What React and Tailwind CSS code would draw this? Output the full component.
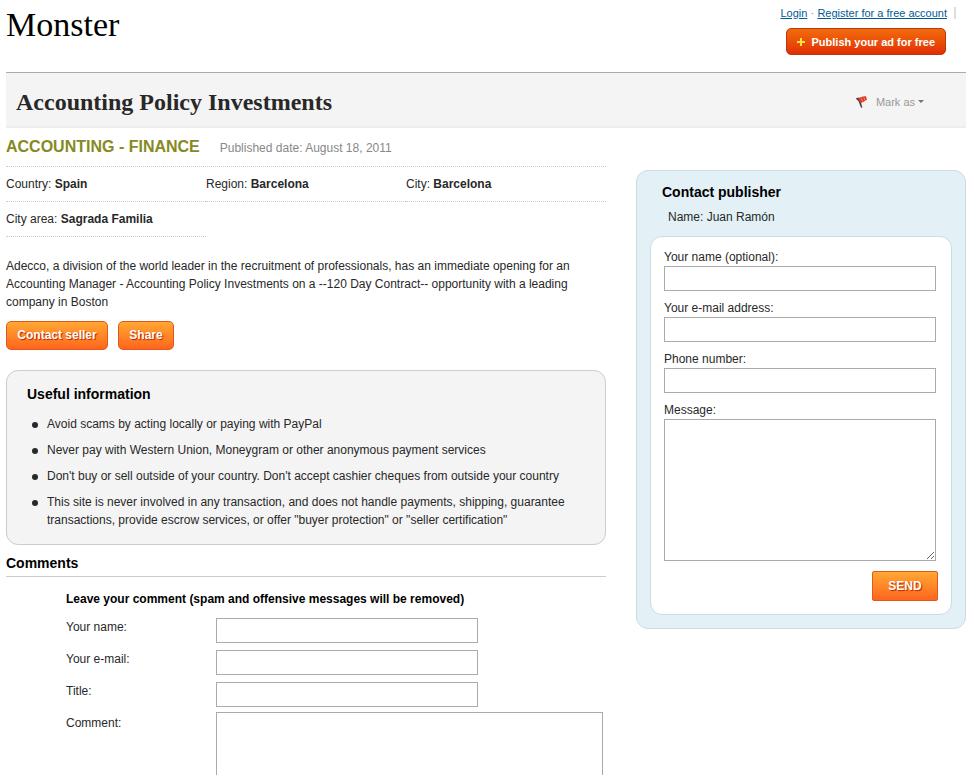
const buttonLook =
  "border border-[#e2581a] bg-gradient-to-b from-[#ffa733] to-[#ff641c] font-bold text-[12px] text-white text-shadow-[1px_1px_1px_#b02800]";
const fieldLook = "block border border-[#aaaaaa] bg-white px-1 outline-none";

const facts = [
  ["Country", "Spain"],
  ["Region", "Barcelona"],
  ["City", "Barcelona"],
  ["City area", "Sagrada Familia"],
];

const tips = [
  "Avoid scams by acting locally or paying with PayPal",
  "Never pay with Western Union, Moneygram or other anonymous payment services",
  "Don't buy or sell outside of your country. Don't accept cashier cheques from outside your country",
  'This site is never involved in any transaction, and does not handle payments, shipping, guarantee transactions, provide escrow services, or offer "buyer protection" or "seller certification"',
];

const contactFields = [
  ["contact-name", "Your name (optional):", "text"],
  ["contact-email", "Your e-mail address:", "email"],
  ["contact-phone", "Phone number:", "tel"],
];

const commentFields = [
  ["comment-name", "Your name:", "text"],
  ["comment-email", "Your e-mail:", "email"],
  ["comment-title", "Title:", "text"],
];

function Header() {
  return (
    <header className="flex h-[72px] items-start justify-between">
      <p className="pt-[5px] font-['Liberation_Serif',serif] text-[34px] leading-10 text-black">Monster</p>
      <div className="flex flex-col items-end gap-[7px] pt-[5px]">
        <nav className="flex items-center text-[11px] leading-4 text-[#005c94]">
          <a href="#login" className="underline">Login</a>
          <span className="w-[10px] text-center text-[#888888]">·</span>
          <a href="#register" className="underline">Register for a free account</a>
          <span className="ml-[7px] mr-[10px] h-3 w-[2px] bg-[#dddddd]" />
        </nav>
        <button
          type="button"
          className="mr-5 flex h-[27px] items-center gap-[7px] rounded-[5px] border border-[#b83a0c] bg-gradient-to-b from-[#f26b0c] to-[#e22c06] px-[10px] text-[11px] font-bold text-white"
        >
          <svg viewBox="0 0 8 8" className="size-2" aria-hidden="true">
            <path d="M3 0h2v3h3v2H5v3H3V5H0V3h3z" fill="#ffdf3a" />
          </svg>
          Publish your ad for free
        </button>
      </div>
    </header>
  );
}

function TitleBar() {
  return (
    <div className="flex h-14 items-center justify-between border-t border-b-2 border-t-[#aaaaaa] border-b-[#ededed] bg-[#f4f4f4] pl-[10px] pr-[42px]">
      <h1 className="pt-1 font-['Liberation_Serif',serif] text-[24px] font-bold leading-7 text-[#282828]">
        Accounting Policy Investments
      </h1>
      <button type="button" className="flex items-center pt-1 text-[11px] leading-4 text-[#999999]">
        <svg viewBox="0 0 14 14" className="mr-[7px] size-[14px]" aria-hidden="true">
          <path d="M.6 3.6L3.4 2.6L5.2 5L7.4 12.4L6 12.8L3.4 6Z" fill="#444444" />
          <path d="M3 2.8C5.4 3.4 7.4 .8 11 1.4L12 5C9.6 5 8.6 8 5 7.8Z" fill="#dc3520" />
          <path d="M6.2 3.4l1.4 3M8.8 2.4l1.2 2.6" stroke="#f6a292" strokeWidth=".9" />
        </svg>
        Mark as
        <svg viewBox="0 0 6 3" className="ml-[3px] h-[3px] w-[6px]" aria-hidden="true">
          <path d="M0 0h6L3 3z" fill="#777777" />
        </svg>
      </button>
    </div>
  );
}

function ContactPublisher() {
  return (
    <aside className="mt-[42px] w-[330px] shrink-0 rounded-[12px] border border-[#c9dde3] bg-[#e3f0f6] px-[13px] pt-3 pb-[13px]">
      <h2 className="pl-3 text-[14px] font-bold text-black">Contact publisher</h2>
      <p className="mt-[7px] pl-[18px]">Name: Juan Ramón</p>
      <form className="mt-[10px] rounded-[12px] border border-[#c9dde3] bg-white px-[13px] pt-[11px] pb-[13px]">
        {contactFields.map(([id, label, type]) => (
          <div key={id} className="mb-2">
            <label htmlFor={id} className="block">{label}</label>
            <input id={id} type={type} className={`${fieldLook} h-[25px] w-[272px]`} />
          </div>
        ))}
        <label htmlFor="contact-message" className="block">Message:</label>
        <textarea id="contact-message" className={`${fieldLook} h-[142px] w-[272px] resize`} />
        <button type="button" className={`${buttonLook} mt-[10px] ml-auto block h-[30px] w-[66px] rounded-[2px]`}>
          SEND
        </button>
      </form>
    </aside>
  );
}

function Comments() {
  return (
    <section className="mt-2">
      <h2 className="border-b border-[#cccccc] pt-[1px] pb-1 text-[14px] font-bold text-black">Comments</h2>
      <form className="pt-[13px] pl-[60px]">
        <p className="font-bold text-black">Leave your comment (spam and offensive messages will be removed)</p>
        <div className="mt-[10px] flex flex-col gap-[7px]">
          {commentFields.map(([id, label, type]) => (
            <div key={id} className="flex items-start">
              <label htmlFor={id} className="w-[150px]">{label}</label>
              <input id={id} type={type} className={`${fieldLook} h-[25px] w-[262px]`} />
            </div>
          ))}
        </div>
        <div className="mt-[5px] flex items-start">
          <label htmlFor="comment-text" className="w-[150px] pt-[2px]">Comment:</label>
          <textarea id="comment-text" className={`${fieldLook} h-[142px] w-[387px] resize`} />
        </div>
      </form>
    </section>
  );
}

export default function App() {
  return (
    <div className="bg-white pr-[2px] pl-[6px] font-['Liberation_Sans',Arial,sans-serif] text-[12px] leading-[18px] text-[#282828]">
      <Header />
      <TitleBar />
      <div className="flex items-start gap-[30px]">
        <main className="min-w-0 flex-1">
          <div className="flex h-[39px] items-center gap-5 border-b border-dotted border-[#cccccc]">
            <h2 className="text-[16px] font-bold text-[#858a22]">ACCOUNTING - FINANCE</h2>
            <p className="pt-[2px] text-[#888888]">Published date: August 18, 2011</p>
          </div>
          <ul className="grid grid-cols-3">
            {facts.map(([name, value]) => (
              <li key={name} className="h-[35px] border-b border-dotted border-[#cccccc] pt-2">
                {name}: <strong>{value}</strong>
              </li>
            ))}
          </ul>
          <p className="mt-5">
            Adecco, a division of the world leader in the recruitment of professionals, has an immediate opening for an
            Accounting Manager - Accounting Policy Investments on a --120 Day Contract-- opportunity with a leading
            company in Boston
          </p>
          <div className="mt-[10px] flex gap-[10px]">
            <button type="button" className={`${buttonLook} h-[29px] w-[102px] rounded-[5px] pb-[2px]`}>Contact seller</button>
            <button type="button" className={`${buttonLook} h-[29px] w-[56px] rounded-[5px] pb-[2px]`}>Share</button>
          </div>
          <section className="mt-5 rounded-[12px] border border-[#cccccc] bg-[#f4f4f4] px-5 pt-[14px] pb-[15px]">
            <h2 className="text-[14px] font-bold text-black">Useful information</h2>
            <ul className="mt-3 flex flex-col gap-2 pl-[5px]">
              {tips.map((tip) => (
                <li key={tip} className="flex items-start gap-[9px]">
                  <span className="mt-[7px] size-[6px] shrink-0 rounded-full bg-[#282828]" />
                  <span>{tip}</span>
                </li>
              ))}
            </ul>
          </section>
          <Comments />
        </main>
        <ContactPublisher />
      </div>
    </div>
  );
}
